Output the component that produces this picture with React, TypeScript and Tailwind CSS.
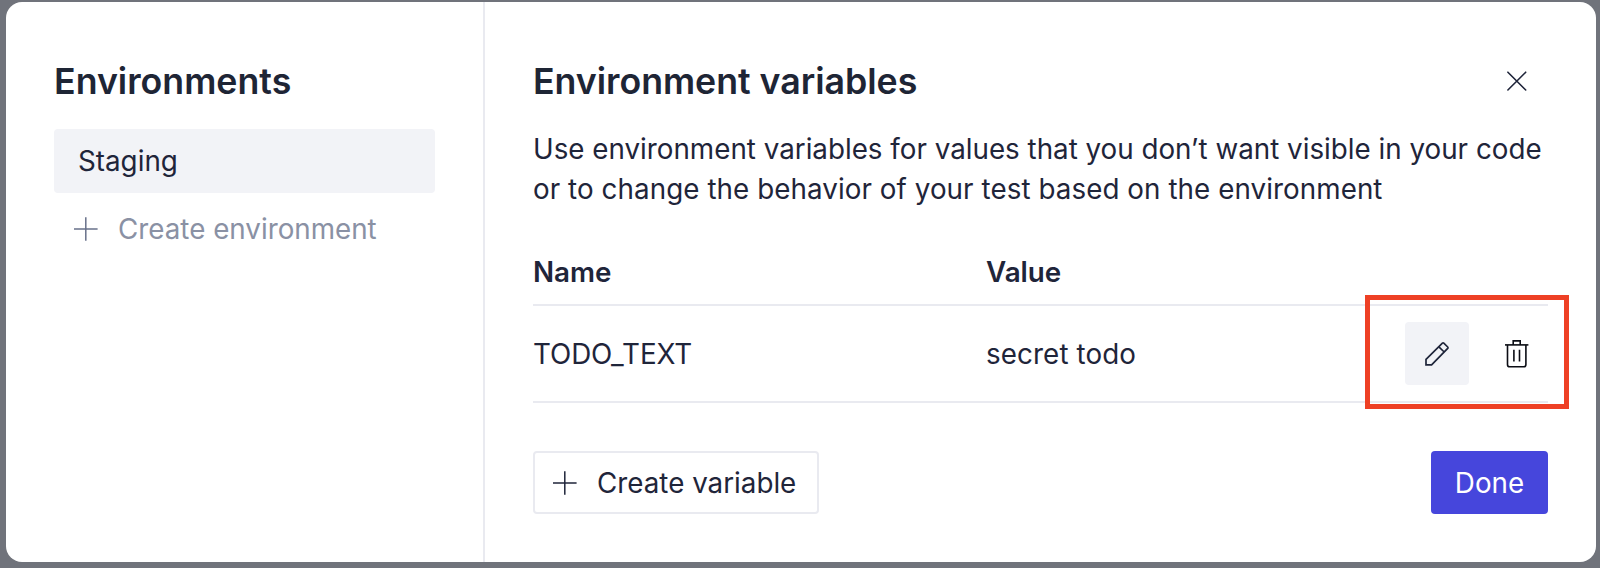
import React from "react";

type IconProps = { className?: string };

function PlusIcon({ className }: IconProps) {
  return (
    <svg className={className} width="24" height="24" viewBox="0 0 24 24" fill="none" stroke="currentColor" strokeWidth="1.5">
      <path d="M11.8 0.2V23.8M0 12H23.6" />
    </svg>
  );
}

function CloseIcon() {
  return (
    <svg width="20" height="20" viewBox="0 0 20 20" fill="none" stroke="currentColor" strokeWidth="1.6" strokeLinecap="round">
      <path d="M0.9 1.2L18.7 19M18.7 1.2L0.9 19" />
    </svg>
  );
}

function PencilIcon() {
  return (
    <svg width="24" height="24" viewBox="0 0 24 24" fill="none" stroke="currentColor" strokeWidth="1.7" strokeLinejoin="miter">
      <path d="M1 17.4L17.4 1.2Q18.1 0.6 18.8 1.2L22.7 5Q23.3 5.7 22.7 6.4L6.6 22.9H1Z" />
      <path d="M13.9 4.9L19.2 10" />
    </svg>
  );
}

function TrashIcon() {
  return (
    <svg width="24" height="28" viewBox="0 0 24 28" fill="none" stroke="#0b0d14" strokeWidth="1.6">
      <path d="M0 4.9H23.4" />
      <path d="M8.2 4.9V0.9H15.2V4.9" />
      <path d="M2.5 4.9V24.4Q2.5 26.8 4.9 26.8H18.5Q20.9 26.8 20.9 24.4V4.9" />
      <path d="M8.9 9.8V21.6M14.5 9.8V21.6" />
    </svg>
  );
}

export default function App() {
  return (
    <div className="h-[568px] w-[1600px] overflow-hidden bg-[#70737b] pt-[2px] pr-1 pb-1.5 pl-1.5 font-[Inter,sans-serif] text-[27.78px] leading-10 text-[#1f253a]">
      <div className="flex h-[560px] overflow-hidden rounded-2xl bg-white">
        <aside className="w-[479px] shrink-0 border-r-2 border-[#e9eaf0] pt-[55px] pr-12 pl-12">
          <h2 className="text-[35.72px] leading-12 font-semibold text-[#1e2535]">Environments</h2>
          <div className="mt-6 flex h-16 w-[381px] items-center rounded bg-[#f2f3f7] pb-px pl-6">Staging</div>
          <button className="mt-4 flex h-10 items-center gap-5 pl-5 text-[#8a91a4]">
            <PlusIcon className="text-[#68718a]" />
            <span>Create environment</span>
          </button>
        </aside>

        <main className="flex-1 pt-[55px] pr-12 pl-12">
          <header className="flex h-12 items-center justify-between">
            <h2 className="text-[35.72px] leading-12 font-semibold tracking-[-0.03px] text-[#1e2535]">Environment variables</h2>
            <button className="pr-[21px]" aria-label="Close">
              <CloseIcon />
            </button>
          </header>
          <p className="mt-[25px] leading-[39.6px] whitespace-nowrap">
            Use environment variables for values that you don’t want visible in your code
            <br />
            <span className="tracking-[0.07px]">or to change the behavior of your test based on the environment</span>
          </p>

          <div className="relative mt-[31px]">
            <div className="flex h-[66px] items-center border-b-2 border-[#e9eaf0] font-semibold">
              <span className="w-[453px]">Name</span>
              <span>Value</span>
            </div>
            <div className="flex h-[97px] items-center border-b-2 border-[#e9eaf0]">
              <span className="w-[453px] tracking-[-0.1px]">TODO_TEXT</span>
              <span className="tracking-[0.1px]">secret todo</span>
              <div className="ml-auto flex items-center">
                <button className="flex h-[63px] w-16 items-center justify-center rounded bg-[#f2f3f7]" aria-label="Edit">
                  <PencilIcon />
                </button>
                <button className="flex h-[63px] w-[79px] items-center justify-end pr-[19px]" aria-label="Delete">
                  <TrashIcon />
                </button>
              </div>
            </div>
            <div className="pointer-events-none absolute top-[54.8px] -right-[21px] h-[114px] w-[204px] border-5 border-[#ee4025]" />
          </div>

          <footer className="mt-12 flex items-center justify-between">
            <button className="flex h-[63px] w-[286px] items-center gap-5 rounded border-2 border-[#e9eaf0] pl-[18px]">
              <PlusIcon />
              <span>Create variable</span>
            </button>
            <button className="h-[63px] w-[117px] rounded bg-[#4646dc] text-white">Done</button>
          </footer>
        </main>
      </div>
    </div>
  );
}
